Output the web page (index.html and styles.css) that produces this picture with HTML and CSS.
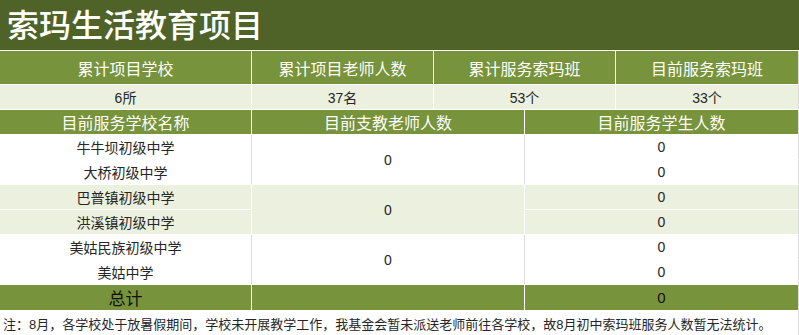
FILE: index.html
```html
<!DOCTYPE html>
<html lang="zh-CN">
<head>
    <meta charset="UTF-8">
    <meta name="viewport" content="width=device-width, initial-scale=1.0">
    <title>索玛生活教育项目</title>
    <link rel="stylesheet" href="styles.css">
</head>
<body>
    <div class="report">
        <h1 class="report-title">索玛生活教育项目</h1>

        <table class="stats">
            <colgroup>
                <col style="width: 252px">
                <col style="width: 182px">
                <col style="width: 91px">
                <col style="width: 91px">
                <col>
            </colgroup>

            <!-- 汇总 -->
            <tr class="head head-tall">
                <th>累计项目学校</th>
                <th>累计项目老师人数</th>
                <th colspan="2">累计服务索玛班</th>
                <th>目前服务索玛班</th>
            </tr>
            <tr class="tint summary">
                <td>6所</td>
                <td>37名</td>
                <td colspan="2">53个</td>
                <td>33个</td>
            </tr>

            <!-- 学校明细 -->
            <tr class="head">
                <th>目前服务学校名称</th>
                <th colspan="2">目前支教老师人数</th>
                <th colspan="2">目前服务学生人数</th>
            </tr>
            <tr class="plain">
                <td>牛牛坝初级中学</td>
                <td colspan="2" rowspan="2">0</td>
                <td colspan="2">0</td>
            </tr>
            <tr class="plain">
                <td>大桥初级中学</td>
                <td colspan="2">0</td>
            </tr>
            <tr class="tint">
                <td>巴普镇初级中学</td>
                <td colspan="2" rowspan="2">0</td>
                <td colspan="2">0</td>
            </tr>
            <tr class="tint">
                <td>洪溪镇初级中学</td>
                <td colspan="2">0</td>
            </tr>
            <tr class="plain">
                <td>美姑民族初级中学</td>
                <td colspan="2" rowspan="2">0</td>
                <td colspan="2">0</td>
            </tr>
            <tr class="plain">
                <td>美姑中学</td>
                <td colspan="2">0</td>
            </tr>
            <tr class="total">
                <td class="total-label">总计</td>
                <td colspan="2"></td>
                <td colspan="2">0</td>
            </tr>
            <tr class="note">
                <td colspan="5">注：8月，各学校处于放暑假期间，学校未开展教学工作，我基金会暂未派送老师前往各学校，故8月初中索玛班服务人数暂无法统计。</td>
            </tr>
        </table>
    </div>
</body>
</html>
```

FILE: styles.css
```css
body {
    margin: 0;
    padding: 0;
    background: #ffffff;
    font-family: "Liberation Sans", "Noto Sans CJK SC", sans-serif;
    color: #262626;
}

.report {
    width: 799px;
}

.report-title {
    margin: 0;
    height: 50px;
    padding-left: 7px;
    background-color: #4f6228;
    border-bottom: 1px solid #ffffff;
    color: #ffffff;
    font-size: 32px;
    font-weight: 500;
    line-height: 52px;
    box-sizing: content-box;
}

.stats {
    width: 799px;
    table-layout: fixed;
    border-collapse: separate;
    border-spacing: 0;
}

.stats th,
.stats td {
    box-sizing: border-box;
    height: 25px;
    padding: 0;
    text-align: center;
    font-size: 14px;
    font-weight: normal;
    border-right: 1px solid #ffffff;
    border-bottom: 1px solid #ffffff;
    white-space: nowrap;
}

.stats th:last-child,
.stats td:last-child {
    border-right: 1px solid #dcdcdc;
}

.head th {
    background-color: #77933c;
    color: #ffffff;
    font-size: 16px;
}

.head-tall th {
    height: 34px;
}

.summary td {
    font-size: 14px;
}

.tint td {
    background-color: #ebf1de;
}

.plain td {
    background-color: #ffffff;
    border-right-color: #dcdcdc;
}

.total td {
    background-color: #77933c;
    color: #111111;
    font-size: 15px;
}

.total-label {
    font-size: 17px !important;
}

.note td {
    text-align: left;
    padding-left: 3px;
    font-size: 13px;
    border-bottom: 1px solid #dcdcdc;
}
```
